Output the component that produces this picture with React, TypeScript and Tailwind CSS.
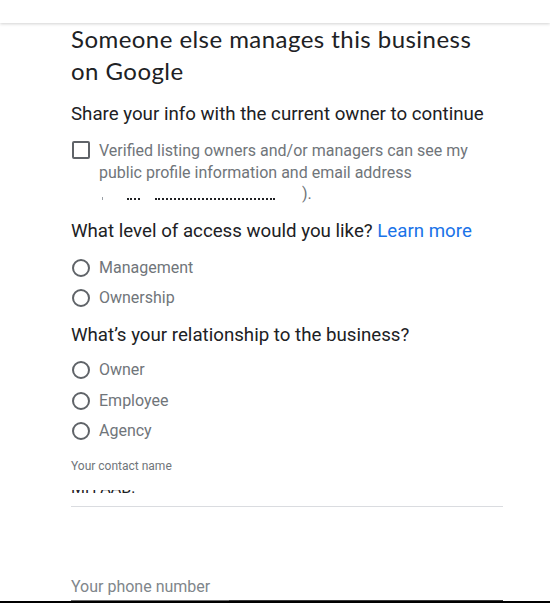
import React from "react";

const Radio = ({ label }: { label: string }) => (
  <div className="flex h-[30.6px] items-center">
    <div className="ml-px h-[18px] w-[18px] rounded-full border-2 border-[#5f6368]" />
    <span className="ml-[9px] text-[16px] leading-[20px] text-[#70757a]">{label}</span>
  </div>
);

export default function App() {
  return (
    <div className="relative h-[603px] w-[550px] overflow-hidden bg-white" style={{ fontFamily: "Roboto, 'Liberation Sans', sans-serif" }}>
      <div className="h-[23px] bg-white shadow-[0_1px_3px_rgba(0,0,0,0.18)]" />
      <div className="ml-[71px] w-[432px]">
        <h1 className="text-[24px] leading-[32px] tracking-[0.45px] text-[#202124]" style={{ fontFamily: "Lato, 'Open Sans', sans-serif" }}>
          Someone else manages this business
          <br />
          on Google
        </h1>
        <p className="mt-[15px] text-[18.7px] leading-[24px] text-[#202124]">Share your info with the current owner to continue</p>
        <div className="mt-[14px] flex items-start">
          <div className="ml-px mt-px h-[18px] w-[18px] shrink-0 rounded-[2px] border-2 border-[#5f6368]" />
          <div className="ml-[9px] text-[16px] leading-[21.5px] text-[#70757a]">
            <div>Verified listing owners and/or managers can see my</div>
            <div>public profile information and email address</div>
            <div className="flex h-[21.5px] items-end pb-[5px]">
              <span className="ml-[3px] h-[3px] w-px bg-[#9aa0a6]" />
              <span className="ml-[24px] h-[2px] w-[13px] border-b-2 border-dotted border-[#202124]" />
              <span className="ml-[15px] h-[2px] w-[120px] border-b-2 border-dotted border-[#202124]" />
              <span className="ml-[27px] mb-[-5px] leading-[21.5px]">).</span>
            </div>
          </div>
        </div>
        <p className="mt-[14px] text-[18.7px] leading-[24px] text-[#202124]">
          What level of access would you like? <span className="text-[#1a73e8]">Learn more</span>
        </p>
        <div className="mt-[10px]">
          <Radio label="Management" />
          <Radio label="Ownership" />
        </div>
        <p className="mt-[9px] text-[18.7px] leading-[24px] text-[#202124]">What’s your relationship to the business?</p>
        <div className="mt-[8px]">
          <Radio label="Owner" />
          <Radio label="Employee" />
          <Radio label="Agency" />
        </div>
        <div className="mt-[12px] text-[12px] leading-[16px] text-[#70757a]">Your contact name</div>
        <div className="mt-[16px] h-[4px] overflow-hidden">
          <div className="-mt-[10px] text-[16px] leading-[16px] text-[#202124]">MH AAB:</div>
        </div>
        <div className="mt-[12px] h-px bg-[#dadce0]" />
        <div className="mt-[70px] text-[16px] leading-[20px] text-[#80868b]">Your phone number</div>
      </div>
      <div className="absolute bottom-0 left-0 w-full">
        <div className="ml-[71px] flex h-px w-[432px]">
          <div className="w-[158px] bg-[#6b6b6b]" />
          <div className="flex-1 bg-[#3a3a3a]" />
        </div>
        <div className="h-[2px] bg-black" />
      </div>
    </div>
  );
}
